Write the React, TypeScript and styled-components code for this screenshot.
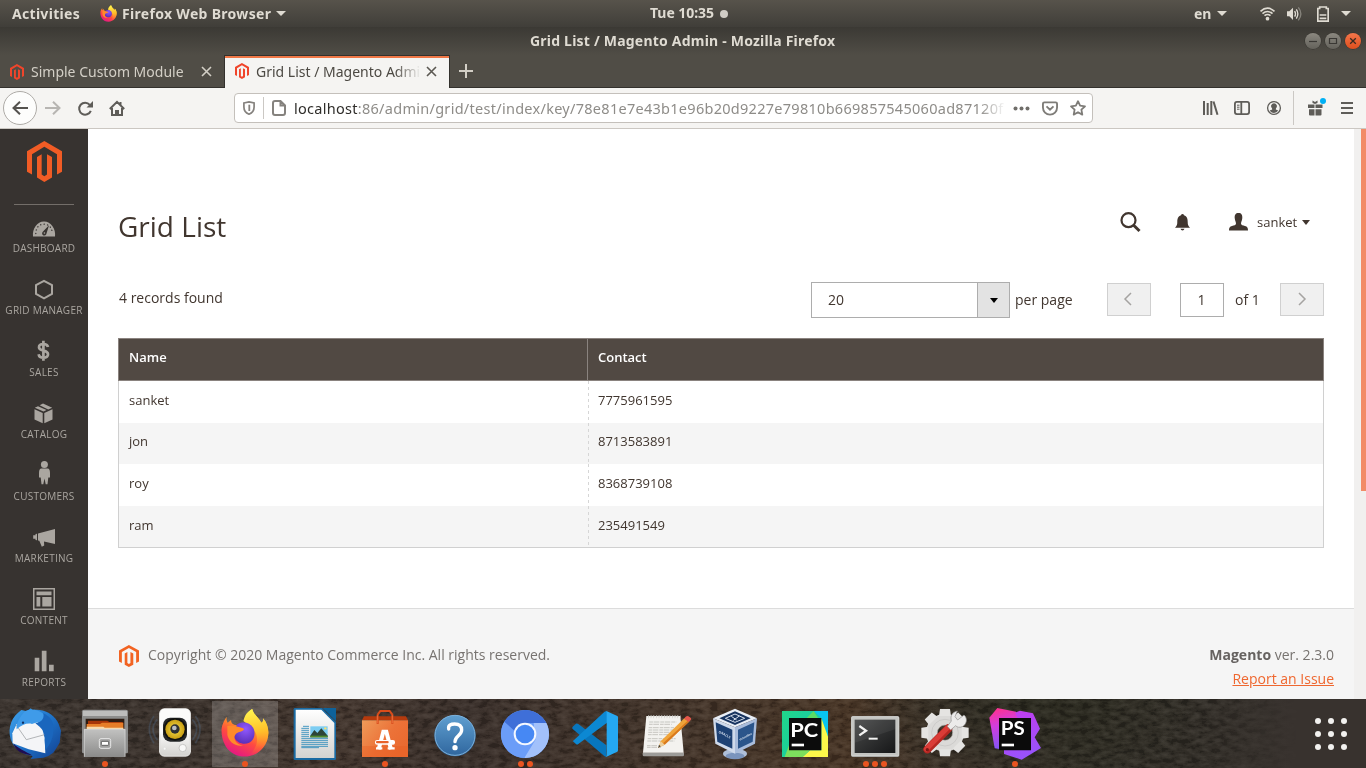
import React from "react";
import styled, { createGlobalStyle } from "styled-components";

const UI = `"Noto Sans", "Open Sans", sans-serif`;
const PAGE = `"Open Sans", "Noto Sans", sans-serif`;

const Global = createGlobalStyle`
  * { box-sizing: border-box; }
  body { margin: 0; width: 1366px; height: 768px; overflow: hidden; background: #3b3530; }
  svg { display: block; flex: none; overflow: visible; }
`;

const Desktop = styled.div`
  width: 1366px;
  height: 768px;
  display: flex;
  flex-direction: column;
  font-family: ${UI};
  overflow: hidden;
`;

/* ---------- system bar ---------- */

const SystemBar = styled.header`
  height: 27px;
  display: grid;
  grid-template-columns: 1fr auto 1fr;
  align-items: center;
  background: linear-gradient(#57534b, #403e39);
  color: #dfdbd2;
`;

const BarGroup = styled.div<{ $end?: boolean; $pad?: string }>`
  display: flex;
  align-items: center;
  height: 27px;
  justify-content: ${(p) => (p.$end ? "flex-end" : "flex-start")};
  padding: ${(p) => p.$pad ?? "0"};
`;

const UiText = styled.span<{ $w: number; $bold?: boolean; $ls?: number; $size?: number; $gap?: number; $up?: number }>`
  flex: none;
  width: ${(p) => p.$w}px;
  margin-left: ${(p) => p.$gap ?? 0}px;
  padding-bottom: ${(p) => p.$up ?? 0}px;
  white-space: nowrap;
  line-height: 20px;
  font-size: ${(p) => p.$size ?? 14}px;
  font-weight: ${(p) => (p.$bold ? 700 : 400)};
  letter-spacing: ${(p) => p.$ls ?? 0}px;
`;

const Caret = styled.i<{ $w?: number; $h?: number; $color?: string; $gap?: number }>`
  flex: none;
  width: 0;
  height: 0;
  margin-left: ${(p) => p.$gap ?? 0}px;
  border-left: ${(p) => p.$w ?? 5}px solid transparent;
  border-right: ${(p) => p.$w ?? 5}px solid transparent;
  border-top: ${(p) => p.$h ?? 5}px solid ${(p) => p.$color ?? "#dfdbd2"};
`;

const Dot = styled.i`
  width: 8px;
  height: 8px;
  margin-left: 5px;
  border-radius: 50%;
  background: #d0ccc5;
`;

/* ---------- window chrome ---------- */

const TitleBar = styled.div`
  height: 28px;
  display: flex;
  align-items: center;
  justify-content: space-between;
  padding: 0 5px 0 530px;
  background: linear-gradient(#3b3934, #504d46);
  color: #dfdbd2;
`;

const WindowButtons = styled.div`
  display: flex;
  gap: 4px;
`;

const WindowButton = styled.span<{ $close?: boolean }>`
  width: 16px;
  height: 16px;
  border-radius: 50%;
  display: grid;
  place-items: center;
  background: ${(p) => (p.$close ? "linear-gradient(#f4764b, #df4f1d)" : "linear-gradient(#8b8880, #64625b)")};
  box-shadow: 0 0 0 0.5px #34322e;
`;

const TabStrip = styled.div`
  height: 33px;
  display: flex;
  align-items: stretch;
  background: #504d46;
  box-shadow: inset 0 -1px #33312d;
`;

const Tab = styled.div<{ $active?: boolean }>`
  width: ${(p) => (p.$active ? 226 : 224)}px;
  display: flex;
  align-items: center;
  padding-left: 10px;
  color: ${(p) => (p.$active ? "#4c4943" : "#d3cfc6")};
  background: ${(p) => (p.$active ? "#f5f4f2" : "transparent")};
  border: ${(p) => (p.$active ? "1px solid #33312d" : "0")};
  border-bottom: 0;
  padding-bottom: ${(p) => (p.$active ? 2 : 0)}px;
  box-shadow: ${(p) => (p.$active ? "inset 0 2px #f07746" : "none")};
`;

const Fade = styled.div<{ $w: number; $tail: number; $gap?: number }>`
  flex: none;
  width: ${(p) => p.$w}px;
  margin-left: ${(p) => p.$gap ?? 0}px;
  overflow: hidden;
  mask-image: linear-gradient(to right, #000 ${(p) => p.$w - p.$tail}px, transparent);
`;

const TabIcon = styled.div<{ $gap: number }>`
  margin-left: ${(p) => p.$gap}px;
`;

const Toolbar = styled.div`
  height: 41px;
  display: flex;
  align-items: center;
  background: #f5f4f2;
  border-bottom: 1px solid #cbc7c2;
  color: #5e5c58;
`;

const BackButton = styled.div`
  width: 34px;
  height: 34px;
  margin-left: 3px;
  border: 1px solid #aeaba7;
  border-radius: 50%;
  background: #fdfdfc;
  display: grid;
  place-items: center;
`;

const Slot = styled.div<{ $gap: number }>`
  margin-left: ${(p) => p.$gap}px;
`;

const UrlBar = styled.div`
  width: 859px;
  height: 30px;
  margin-left: 109px;
  display: flex;
  align-items: center;
  border: 1px solid #c4c0bb;
  border-radius: 4px;
  background: #fff;
  color: #8e8c88;
  b { font-weight: 400; color: #2f2d2a; }
`;

const VLine = styled.i<{ $h: number; $gap: number }>`
  width: 1px;
  height: ${(p) => p.$h}px;
  margin-left: ${(p) => p.$gap}px;
  background: #cbc8c4;
`;

/* ---------- Magento admin ---------- */

const Viewport = styled.div`
  height: 570px;
  display: flex;
  font-family: ${PAGE};
  color: #41362f;
  background: #fff;
`;

const Sidebar = styled.nav`
  width: 88px;
  display: flex;
  flex-direction: column;
  align-items: center;
  padding-top: 12px;
  background: #373330;
  overflow: hidden;
`;

const SideRule = styled.i`
  flex: none;
  width: 60px;
  height: 1px;
  margin: 22px 0 11px;
  background: #736e69;
`;

const NavItem = styled.a`
  flex: none;
  height: 62px;
  width: 88px;
  display: flex;
  flex-direction: column;
  align-items: center;
  color: #aaa6a0;
`;

const NavLabel = styled.span`
  height: 14px;
  line-height: 14px;
  font-size: 10px;
  letter-spacing: 0.25px;
  white-space: nowrap;
`;

const Content = styled.main`
  width: 1266px;
  display: flex;
  flex-direction: column;
`;

const PageHead = styled.div`
  display: flex;
  justify-content: space-between;
  align-items: flex-start;
  padding: 78px 44px 0 30px;
  height: 153px;
`;

const PageTitle = styled.h1`
  margin: 0;
  font-size: 28px;
  line-height: 38px;
  font-weight: 400;
`;

const HeadActions = styled.div`
  display: flex;
  align-items: center;
  height: 30px;
  font-size: 13px;
`;

const UserName = styled.span`
  width: 39px;
  margin-left: 9px;
  white-space: nowrap;
`;

const GridToolbar = styled.div`
  display: flex;
  align-items: center;
  height: 36px;
  padding: 0 30px 0 31px;
  font-size: 14px;
  line-height: 20px;
`;

const Records = styled.span`
  flex: 1;
  padding-bottom: 4px;
`;

const Select = styled.div`
  width: 199px;
  height: 36px;
  display: flex;
  border: 1px solid #adadad;
`;

const SelectValue = styled.span`
  flex: 1;
  padding-left: 16px;
  line-height: 34px;
`;

const SelectArrow = styled.span`
  width: 32px;
  display: grid;
  place-items: center;
  background: #e3e3e3;
  border-left: 1px solid #adadad;
`;

const PagerText = styled.span<{ $w: number; $gap: number }>`
  width: ${(p) => p.$w}px;
  margin-left: ${(p) => p.$gap}px;
  white-space: nowrap;
`;

const PageButton = styled.span<{ $gap: number }>`
  width: 44px;
  height: 33px;
  margin: 0 0 1px ${(p) => p.$gap}px;
  display: grid;
  place-items: center;
  background: #f0f0f0;
  border: 1px solid #d0d0d0;
`;

const PageInput = styled.span`
  width: 44px;
  height: 34px;
  margin-left: 29px;
  border: 1px solid #adadad;
  text-align: center;
  line-height: 32px;
  padding-right: 1px;
`;

const Table = styled.div`
  margin: 20px 30px 0;
  height: 210px;
  border: 1px solid #d0d0d0;
  border-top: 0;
  font-size: 13px;
`;

const HeadRow = styled.div`
  display: grid;
  grid-template-columns: 469px 1fr;
  height: 43px;
  margin: 0 -1px;
  background: #514943;
  border: 1px solid #8a837f;
  color: #fff;
  font-weight: 600;
`;

const HeadCell = styled.span`
  padding-left: 10px;
  line-height: 37px;
  & + & { padding-left: 10px; border-left: 1px solid #8a837f; margin-left: -1px; }
`;

const Row = styled.div<{ $h: number; $alt: boolean }>`
  display: grid;
  grid-template-columns: 469px 1fr;
  height: ${(p) => p.$h}px;
  background: ${(p) => (p.$alt ? "#f5f5f5" : "#fff")};
`;

const Cell = styled.span<{ $lh: number }>`
  padding-left: 10px;
  height: 100%;
  line-height: ${(p) => p.$lh}px;
  & + & {
    background: repeating-linear-gradient(#d6d6d6 0 3px, transparent 3px 6px) 0 0 / 1px 100% no-repeat;
  }
`;

const Footer = styled.footer`
  height: 91px;
  margin-top: auto;
  padding: 35px 20px 0 31px;
  display: flex;
  justify-content: space-between;
  align-items: flex-start;
  background: #f5f5f5;
  border-top: 1px solid #dcdcdc;
  color: #777370;
  font-size: 14px;
  line-height: 24px;
`;

const Copyright = styled.div`
  display: flex;
  align-items: flex-start;
  gap: 9px;
  line-height: 22px;
  svg { margin-top: 1px; }
`;

const Version = styled.div`
  text-align: right;
  line-height: 22px;
  b { font-weight: 700; color: #666260; }
`;

const IssueLink = styled.a`
  display: block;
  margin-top: 2px;
  color: #ef672f;
  text-decoration: underline;
`;

const ScrollTrack = styled.div`
  width: 12px;
  background: #f1f0ef;
  display: flex;
  justify-content: flex-end;
`;

const ScrollThumb = styled.i`
  width: 5px;
  height: 362px;
  background: #f28b67;
`;

/* ---------- dock ---------- */

const Dock = styled.footer`
  position: relative;
  height: 69px;
  display: flex;
  overflow: hidden;
  background:
    radial-gradient(ellipse 170px 90px at 1030px 0, #2b2a20, transparent),
    linear-gradient(90deg, #3a332e 0, #3c332d 200px, #43362e 330px, #3a302b 470px, #44352a 700px, #473526 850px, #3c3229 950px, #302d25 1080px, #312d27 1200px, #38322e 1290px);
`;

const Wallpaper = styled.svg`
  position: absolute;
  left: 0;
  top: 0;
  mix-blend-mode: soft-light;
  opacity: 0.3;
  mask-image: linear-gradient(to right, #000 1200px, transparent 1300px);
`;

const DockItem = styled.div<{ $active?: boolean }>`
  position: relative;
  width: 70px;
  height: 69px;
  flex: none;
  background: ${(p) =>
    p.$active ? "linear-gradient(rgba(255,255,255,.19), rgba(255,255,255,.19)) 2px 2px / 66px 66px no-repeat" : "none"};
`;

const RunningDots = styled.div`
  position: absolute;
  left: 0;
  right: 0;
  bottom: 1px;
  display: flex;
  justify-content: center;
  gap: 3px;
  i { width: 6px; height: 6px; border-radius: 50%; background: #e95420; }
`;

const AppGrid = styled.div`
  position: relative;
  display: grid;
  grid-template-columns: repeat(3, 6px);
  grid-auto-rows: 6px;
  gap: 7px;
  margin: 19px 0 0 265px;
  i { border-radius: 50%; background: #f2f1ef; }
`;

/* ---------- drawings ---------- */

const Magento = ({ w, h, color = "#f15c25" }: { w: number; h: number; color?: string }) => (
  <svg width={w} height={h} viewBox="81 40 105 121" preserveAspectRatio="none" fill={color}>
    <path d="M133 40 186 70V131L171 139V79L133 57 96 79V139L81 131V70Z" />
    <path d="M111 87 125 79V139L133 144 141 139V79L156 87V148L133 161 111 148Z" />
  </svg>
);

const Firefox = ({ size, id }: { size: number; id: string }) => (
  <svg width={size} height={size} viewBox="662 38 146 146">
    <defs>
      <linearGradient id={id + "a"} x1=".8" y1="0" x2=".3" y2="1">
        <stop offset="0" stopColor="#fff44f" />
        <stop offset=".35" stopColor="#ffa91e" />
        <stop offset=".65" stopColor="#ff4a41" />
        <stop offset="1" stopColor="#e31587" />
      </linearGradient>
      <radialGradient id={id + "b"} cx=".55" cy=".3" r=".7">
        <stop offset="0" stopColor="#9059ff" />
        <stop offset="1" stopColor="#5b2fb8" />
      </radialGradient>
      <linearGradient id={id + "c"} x1=".5" y1="0" x2=".6" y2="1">
        <stop offset="0" stopColor="#fff44f" />
        <stop offset=".5" stopColor="#ffc02a" />
        <stop offset="1" stopColor="#ff7a2f" stopOpacity="0" />
      </linearGradient>
    </defs>
    <path fill={`url(#${id}a)`} d="M681 63C680 71 681 76 684 81L694 73C694 80 697 85 704 87L730 94 757 80C748 61 740 52 757 40 764 62 777 65 784 81 791 77 790 72 789 68 813 95 808 132 790 155 761 193 702 190 678 151 662 124 664 94 670 83 674 73 678 68 681 63Z" />
    <path fill={`url(#${id}c)`} d="M757 40C764 62 777 65 784 81 791 77 790 72 789 68 813 95 808 132 790 155 779 169 765 174 752 176 776 149 779 116 755 96L731 76C735 58 742 48 757 40Z" />
    <path fill={`url(#${id}b)`} d="M712 86C728 76 750 80 760 96 768 112 764 132 748 141 732 148 712 142 704 126L704 106Z" />
    <path fill="#ff8a2a" d="M683 91C699 88 714 92 728 97 737 100 731 105 724 107 712 109 707 114 704 122 703 138 716 147 730 149 706 154 686 136 683 117Z" />
  </svg>
);

const TabClose = ({ color }: { color: string }) => (
  <svg width="11" height="11" viewBox="0 0 11 11" stroke={color} strokeWidth="1.6" fill="none">
    <path d="M1 1 10 10M10 1 1 10" />
  </svg>
);

const navItems: { label: string; icon: React.ReactNode }[] = [
  {
    label: "DASHBOARD",
    icon: (
      <>
        <path fill="#aaa6a0" d="M6 20.5C5 13 10 5.5 17 5.5S29 13 28 20.5Z" />
        <path stroke="#373330" strokeWidth="1.3" strokeLinecap="round" strokeDasharray=".2 3.3" fill="none" d="M8.8 17.5C8.6 12 12 8.2 17 8.2S25.4 12 25.2 17.5" />
        <path fill="#373330" d="M22 9.2 19.5 17.6A2.2 2.2 0 1 1 15.8 15.8Z" />
        <circle cx="17.4" cy="17" r=".8" fill="#aaa6a0" />
      </>
    ),
  },
  { label: "GRID MANAGER", icon: <path fill="none" stroke="#aaa6a0" strokeWidth="2" d="M17 2.8 25 7.2V16L17 20.3 9 16V7.2Z" /> },
  {
    label: "SALES",
    icon: (
      <path fill="none" stroke="#aaa6a0" strokeWidth="2.7" d="M21 7C20.5 4.6 18.800 4 16.300 4 13.600 4 12 5.200 12 7.200 12 9.600 14.300 10 16.500 10.600 19 11.200 21 12 21 14.300 21 16.600 19 17.700 16.400 17.700 13.600 17.700 12 16.500 11.600 14.200M16.400.7V20.700" />
    ),
  },
  {
    label: "CATALOG",
    icon: (
      <>
        <path fill="#aaa6a0" d="M7.500 7.200 15.700 11V21.300L7.500 17.500ZM25.500 7.200 17.300 11V21.300L25.500 17.500Z" />
        <path fill="#aaa6a0" d="M7.800 5.800 11 4.200 19.500 8.100 16.500 9.600ZM12.600 3.300 16 1.500 25.200 5.800 21.200 7.400Z" />
      </>
    ),
  },
  {
    label: "CUSTOMERS",
    icon: (
      <>
        <circle cx="17.400" cy=".4" r="3.500" fill="#aaa6a0" />
        <path fill="#aaa6a0" d="M14 4.600H21C22.500 5 23 7 23 9V13.500H21.300L20.500 20.300H18.700L17.500 14.500 16.300 20.300H14.500L13.700 13.500H12V9C12 7 12.500 5 14 4.600Z" />
      </>
    ),
  },
  {
    label: "MARKETING",
    icon: (
      <path fill="#aaa6a0" d="M28 3V18L17 15.600 17.200 19.600 14.800 20.700 12.300 14.700 11 14.400V7.600ZM10 7.800V14.200L8.500 14V12.800H6.200V9.300H8.500V8Z" />
    ),
  },
  {
    label: "CONTENT",
    icon: (
      <>
        <path fill="none" stroke="#aaa6a0" strokeWidth="1.500" d="M6.750.75H27.250V21.250H6.750Z" />
        <path fill="#aaa6a0" d="M9.500 3.500H24.500V7.300H9.500ZM9.500 9H13.300V18.500H9.500ZM15.300 9H24.500V18.500H15.300Z" />
      </>
    ),
  },
  { label: "REPORTS", icon: <path fill="#aaa6a0" d="M7.700 7.800H12.300V21.300H7.700ZM14.800.8H19.500V21.300H14.800ZM22 14.700H26.700V21.300H22Z" /> },
];

/* Launcher icons share a grid of three units per pixel. */
const Icon = ({ x, children }: { x: number; children: React.ReactNode }) => (
  <svg width="70" height="69" viewBox={`${x} 9 210 207`}>
    {children}
  </svg>
);

const Gradients = () => (
  <svg width="0" height="0" style={{ position: "absolute" }}>
    <defs>
      <linearGradient id="tb" x2="1" y2="1"><stop stopColor="#42a5ee" /><stop offset=".5" stopColor="#1e72c8" /><stop offset="1" stopColor="#123f8f" /></linearGradient>
      <linearGradient id="steel" x2="0" y2="1"><stop stopColor="#c2c2c1" /><stop offset="1" stopColor="#8b8b8a" /></linearGradient>
      <linearGradient id="white" x2="0" y2="1"><stop stopColor="#fff" /><stop offset="1" stopColor="#d4d3d0" /></linearGradient>
      <linearGradient id="bag" x2="1" y2=".6"><stop stopColor="#ee9b59" /><stop offset=".6" stopColor="#ec7238" /><stop offset="1" stopColor="#ea6a30" /></linearGradient>
      <linearGradient id="help" x2="0" y2="1"><stop stopColor="#5f9fd0" /><stop offset="1" stopColor="#30679f" /></linearGradient>
      <linearGradient id="term" x2="1" y2="1"><stop stopColor="#4a4b4b" /><stop offset="1" stopColor="#161718" /></linearGradient>
      <linearGradient id="pc" x1="0" y1="0" x2="1" y2=".5"><stop stopColor="#21d789" /><stop offset="1" stopColor="#16c9b0" /></linearGradient>
      <linearGradient id="ps" x1=".2" y1="0" x2=".4" y2="1"><stop stopColor="#ff318c" /><stop offset=".4" stopColor="#d33ddd" /><stop offset="1" stopColor="#7a58fb" /></linearGradient>
      <linearGradient id="psr" x2=".3" y2="1"><stop stopColor="#c63bef" /><stop offset="1" stopColor="#9952fb" /></linearGradient>
      <radialGradient id="cone"><stop stopColor="#f7e04c" /><stop offset="1" stopColor="#c99e14" /></radialGradient>
    </defs>
  </svg>
);

const dockApps: { name: string; dots?: number; active?: boolean; art: React.ReactNode }[] = [
  {
    name: "Thunderbird",
    art: (
      <Icon x={0}>
        <path fill="url(#tb)" d="M64 42 82 46 92 37 98 42C128 38 158 52 172 76L176 84 183 104 181 122 179 140 168 158 160 170 145 180 130 185 112 187 92 189 98 180C70 176 42 160 32 130 22 92 36 62 64 42Z" />
        <path fill="#1f0d52" d="M40 142C54 158 76 166 96 178 66 176 46 164 40 142Z" />
        <path fill="#f4f5f7" d="M50 84 110 76 124 88 134 126 136 172 86 160 38 142 37 112Z" />
        <path fill="none" stroke="#8f9296" strokeWidth="2" d="M48 86 79 131 134 116" />
        <path fill="#3f9be9" d="M68 54C78 38 96 38 114 44 134 52 144 64 138 84 126 76 112 78 96 84 82 80 66 86 50 100 48 86 56 68 68 54Z" />
        <path fill="#1a66bd" d="M130 52C148 60 160 74 160 94 162 120 152 146 136 162L134 132C140 110 124 96 106 82 122 80 134 70 130 52Z" />
        <circle cx="69" cy="80" r="3.500" fill="#0d2f63" />
      </Icon>
    ),
  },
  {
    name: "Files", dots: 1,
    art: (
      <Icon x={210}>
        <path fill="#8d8d8c" d="M246 46Q246 41 252 41H378Q384 41 384 46V168Q384 172 380 172H250Q246 172 246 168Z" />
        <path fill="#bdbdbc" d="M249 44H381V60H249Z" />
        <path fill="#2d1c13" d="M257 68H373V100H257Z" />
        <path fill="#a63408" d="M264 74H322L328 78H368V90H264Z" />
        <path fill="#e57d28" d="M260 84H300L306 80H370V100H260Z" />
        <path fill="#f7d9ac" d="M260 92H310L314 95H370V100H260Z" />
        <path fill="url(#steel)" d="M252 99H376V183H252Z" />
        <path fill="none" stroke="#d8d8d8" strokeWidth="2" d="M253 182V100H375V182" />
        <rect x="298" y="128" width="34" height="29" rx="5" fill="#a1a1a0" stroke="#e8e8e8" strokeWidth="3" />
        <rect x="304" y="136" width="22" height="12" rx="2" fill="#fff" stroke="#626262" strokeWidth="3" />
      </Icon>
    ),
  },
  {
    name: "Rhythmbox",
    art: (
      <Icon x={420}>
        <g fill="none" stroke="#52779d" strokeWidth="5" opacity=".28">
          <path d="M472 70Q446 98 472 132M462 60Q434 98 462 142M577 70Q603 98 577 132M586 60Q614 98 586 142" />
        </g>
        <rect x="477" y="37" width="96" height="145" rx="16" fill="#dddcda" />
        <rect x="480" y="38" width="90" height="84" rx="14" fill="#fbfbfa" />
        <rect x="481" y="100" width="88" height="78" rx="12" fill="url(#white)" />
        <rect x="489" y="65" width="72" height="72" rx="22" fill="#26282a" />
        <circle cx="525" cy="100" r="34" fill="#10110f" />
        <circle cx="525" cy="100" r="29" fill="url(#cone)" />
        <circle cx="525" cy="99" r="14" fill="#2e3033" />
        <circle cx="523" cy="96" r="7" fill="#b9bec2" />
        <circle cx="548" cy="156" r="11" fill="#f8f8f7" stroke="#b3b2b0" strokeWidth="2" />
        <circle cx="494" cy="158" r="4" fill="#f7f7f7" stroke="#cbcac8" />
      </Icon>
    ),
  },
  {
    name: "Firefox", dots: 1, active: true,
    art: (
      <svg width="70" height="69" viewBox="0 0 70 69">
        <g transform="translate(10.300 9.300)"><Firefox size={49} id="big" /></g>
      </svg>
    ),
  },
  {
    name: "Writer",
    art: (
      <Icon x={840}>
        <path fill="#1a6aa2" d="M885 36H966L1008 78V188Q1008 192 1004 192H885Q881 192 881 188V40Q881 36 885 36Z" />
        <path fill="url(#white)" d="M887 41H964L1003 81V186H887Z" />
        <path fill="#0e629a" d="M968 36H1008V76Z" />
        <g stroke="#2587b8" strokeWidth="2.500">
          <path d="M909 91H927M904 97H927M904 103H927M904 109H927M904 115H927M904 121H927M904 127H984M904 133H984M904 139H984M904 145H984M904 151H984M904 155H957" />
        </g>
        <rect x="931" y="91" width="52" height="33" fill="#7ccdf2" />
        <path fill="#2d4639" d="M931 119 943 102 952 111 964 97 983 119V124H931Z" />
        <path fill="#4f8c2d" d="M931 119H983V124H931Z" />
        <circle cx="976" cy="97" r="3.500" fill="#f8df6d" />
      </Icon>
    ),
  },
  {
    name: "Software", dots: 1,
    art: (
      <Icon x={15}>
        <path fill="#b53a0d" d="M57 61H183L189 73H51Z" />
        <path fill="url(#bag)" d="M51 73H189V183H51Z" />
        <path fill="#e85c20" d="M51 150H189V183H51Z" opacity=".35" />
        <path fill="none" stroke="#d94c1a" strokeWidth="6" d="M98 84V56L106 45H134L142 56V84" />
        <path fill="none" stroke="#ef7d4e" strokeWidth="2" d="M97 82V58M142 82V58" />
        <path fill="none" stroke="#fff" strokeWidth="12" d="M101 160 115 107H124L138 160" />
        <path stroke="#fff" strokeWidth="7" d="M93 157H112M128 157H149" />
        <rect x="90" y="132" width="60" height="14" rx="6" fill="#fff" />
        <rect x="93" y="135" width="38" height="7" rx="3" fill="#e8622a" />
      </Icon>
    ),
  },
  {
    name: "Help",
    art: (
      <Icon x={225}>
        <circle cx="330" cy="119" r="62" fill="#2d5f93" />
        <circle cx="330" cy="118" r="60" fill="url(#help)" stroke="#7db1d9" strokeWidth="3" />
        <path fill="none" stroke="#fff" strokeWidth="10" strokeLinecap="round" d="M311 99C309 87 318 84 329 84 343 84 350 91 350 102 350 119 330 120 330 137" />
        <circle cx="330" cy="155" r="8" fill="#fff" />
      </Icon>
    ),
  },
  {
    name: "Chromium", dots: 2,
    art: (
      <Icon x={435}>
        <circle cx="540" cy="114" r="72" fill="#6b9df8" />
        <path fill="#3f6fd8" d="M478 77A72 72 0 0 1 604 81H540L508 104Z" />
        <path fill="#a2c1fb" d="M604 81A72 72 0 0 1 538 186L571 132 566 81Z" />
        <path fill="#6b9df8" d="M478 77 509 130 545 148 538 186A72 72 0 0 1 478 77Z" />
        <circle cx="540" cy="114" r="34" fill="#f4f8ff" />
        <circle cx="540" cy="114" r="28" fill="#4688f4" />
      </Icon>
    ),
  },
  {
    name: "Code",
    art: (
      <Icon x={645}>
        <path fill="#0876bd" d="M683 92 693 83Q696 81 700 84L784 148V182Q781 183 777 179L683 99Q680 96 683 92Z" />
        <path fill="#0c88d3" d="M683 136 777 49Q781 44 786 46V80L700 144Q696 147 693 144L683 135Z" />
        <path fill="#25a8f2" d="M784 45 817 60Q819 61 819 64V163Q819 166 817 167L783 183Q785 180 785 175V52Q785 48 784 45Z" />
      </Icon>
    ),
  },
  {
    name: "Text Editor",
    art: (
      <Icon x={855}>
        <path fill="#9d9c99" d="M893 170H1017V177Q1017 181 1013 181H897Q893 181 893 177Z" />
        <path fill="#f3f2ef" d="M904 60H1006L1016 170H894Z" />
        <path stroke="#66645f" strokeWidth="3" strokeDasharray="4 4" d="M909 59H1006" />
        <path stroke="#d2d1cd" strokeWidth="9" strokeDasharray="2 6" d="M909 62H1006" />
        <path stroke="#aaa7a2" strokeWidth="1.800" strokeDasharray="11 2 17 3" d="M913 78H994M912 85H980M911 95H987M910 102H1000M910 109H990M909 116H978M908 128H992M907 135H988M906 149H955M906 154H948" />
        <path fill="#f0a43a" d="M1018 67 1032 77 959 146 940 155 947 136Z" />
        <path fill="#d9791d" d="M1028 74 1032 77 959 146 954 142Z" />
        <path fill="#e5574b" d="M1022 62Q1027 58 1034 63T1037 72L1032 78 1017 68Z" />
        <path fill="#edcf9c" d="M947 136 959 146 940 155Z" />
        <path fill="#333" d="M943 147 947 151 939 156Z" />
      </Icon>
    ),
  },
  {
    name: "VirtualBox",
    art: (
      <Icon x={30}>
        <ellipse cx="135" cy="173" rx="36" ry="15" fill="#aebfd9" />
        <ellipse cx="135" cy="180" rx="28" ry="10" fill="#7a94bd" />
        <path fill="#e9eef6" d="M69 67 135 38 201 67 135 94Z" />
        <path fill="#cfdaeb" d="M69 67 135 94V173L76 143Z" />
        <path fill="#a9bcdb" d="M201 67 135 94V173L195 143Z" />
        <path fill="#17335f" d="M88 67 135 46 182 67 135 87Z" />
        <path fill="none" stroke="#d5deec" strokeWidth="3" d="M106 67 135 54 164 67 135 79ZM124 61 140 72M148 60 130 73" />
        <path fill="#1d4174" d="M77 79 127 101V158L82 137Z" />
        <path fill="#2b558b" d="M193 79 144 101V158L188 137Z" />
        <text x="85" y="110" fill="#c8d5e7" fontFamily="Open Sans, sans-serif" fontSize="10" fontWeight="700" transform="rotate(27 85 110)">ORACLE</text>
        <text x="149" y="134" fill="#d6e0ee" fontFamily="Open Sans, sans-serif" fontSize="8" fontWeight="700" transform="rotate(-27 149 134)">VirtualBox</text>
      </Icon>
    ),
  },
  {
    name: "PyCharm",
    art: (
      <Icon x={240}>
        <path fill="url(#pc)" d="M276 45H414V183H276Z" />
        <path fill="#08c5ef" d="M371 45H414V122L394 65Z" />
        <path fill="#5bdc66" d="M350 66 371 45 384 66Z" />
        <path fill="#fcf84a" d="M394 66 414 122V183H338L360 163H394Z" />
        <path fill="#7de05d" d="M298 145 284 183H338L360 162Z" />
        <path fill="#0c0c0c" d="M297 66H394V163H297Z" />
        <text x="301" y="122" fill="#fff" fontFamily="Lato, sans-serif" fontSize="59" fontWeight="700" textLength="84" lengthAdjust="spacingAndGlyphs">PC</text>
        <path fill="#fff" d="M305 143H342V151H305Z" />
      </Icon>
    ),
  },
  {
    name: "Terminal", dots: 3,
    art: (
      <Icon x={450}>
        <rect x="483" y="60" width="145" height="123" rx="5" fill="#8e8f8c" />
        <rect x="485" y="62" width="141" height="118" rx="3" fill="#c4c5c2" stroke="#e6e6e4" strokeWidth="2" />
        <rect x="494" y="71" width="122" height="100" fill="url(#term)" />
        <path fill="#fff" fillOpacity=".06" d="M494 71H616V100L494 140Z" />
        <path fill="none" stroke="#f3f3f2" strokeWidth="7" d="M508 90 528 104 508 118" />
        <path stroke="#f3f3f2" strokeWidth="6" d="M536 128H563" />
      </Icon>
    ),
  },
  {
    name: "Settings",
    art: (
      <Icon x={660}>
        <g transform="translate(765 110)">
          <circle r="40" fill="none" stroke="#dbdad8" strokeWidth="34" />
          <g fill="#e5e4e2">
            {[0, 45, 90, 135, 180, 225, 270, 315].map((a) => (
              <path key={a} transform={`rotate(${a})`} d="M-18-50 -15-71H15L18-50Z" />
            ))}
          </g>
          <circle r="40" fill="none" stroke="#c4c3c1" strokeWidth="2" />
          <circle r="23" fill="none" stroke="#b3b2b0" strokeWidth="2" />
        </g>
        <path fill="none" stroke="#b52722" strokeWidth="24" strokeLinecap="round" d="M712 160 775 97" />
        <path fill="none" stroke="#da3c37" strokeWidth="15" strokeLinecap="round" d="M709 159 772 96" />
        <path fill="#ecebea" stroke="#92918f" strokeWidth="2" d="M772 91 784 75C780 58 788 48 802 45L795 62 803 72 822 57C833 66 831 83 819 91 810 96 801 94 797 89L782 102Z" />
        <circle cx="712" cy="161" r="5" fill="#7e1815" />
      </Icon>
    ),
  },
  {
    name: "PhpStorm", dots: 1,
    art: (
      <Icon x={870}>
        <path fill="url(#ps)" d="M898 65 922 36 978 47 985 66 960 164 914 157Z" />
        <path fill="url(#psr)" d="M975 50 990 44 1029 52 1050 98 1034 124 1053 156 995 191 942 174 942 158 1000 100Z" />
        <path fill="#0b0b0b" d="M927 66H1023V163H927Z" />
        <text x="932" y="118" fill="#fff" fontFamily="Lato, sans-serif" fontSize="54" fontWeight="700" textLength="72" lengthAdjust="spacingAndGlyphs">PS</text>
        <path fill="#fff" d="M935 143H972V151H935Z" />
      </Icon>
    ),
  },
];

const rows = [
  ["sanket", "7775961595", 42, 38],
  ["jon", "8713583891", 41, 37],
  ["roy", "8368739108", 42, 38],
  ["ram", "235491549", 41, 38],
] as const;

export default function App() {
  return (
    <Desktop>
      <Global />
      <Gradients />
      <SystemBar>
        <BarGroup $pad="0 0 0 12px">
          <UiText $w={88} $bold $ls={0.3}>Activities</UiText>
          <Firefox size={17} id="small" />
          <UiText $w={150} $gap={5} $bold $ls={0.31}>Firefox Web Browser</UiText>
          <Caret $gap={4} />
        </BarGroup>
        <BarGroup $pad="0 0 0 12px">
          <UiText $w={65} $bold $up={1} $ls={-0.05}>Tue 10:35</UiText>
          <Dot />
        </BarGroup>
        <BarGroup $end $pad="0 15px 0 0">
          <UiText $w={18} $bold>en</UiText>
          <Caret $gap={5} />
          <Slot $gap={33}>
            <svg width="15" height="14" viewBox="1062 19 44 42" fill="none" stroke="#dfdbd2" strokeWidth="5">
              <path d="M1063 32Q1084 13 1105 32M1069 39Q1084 26 1099 39M1075 45Q1084 38 1093 45" />
              <circle cx="1084" cy="54" r="5.500" fill="#dfdbd2" stroke="none" />
            </svg>
          </Slot>
          <Slot $gap={12}>
            <svg width="15" height="14" viewBox="1143 19 45 42" fill="none" stroke="#dfdbd2" strokeWidth="4">
              <path fill="#dfdbd2" stroke="none" d="M1143 32H1150L1161 21V58L1150 47H1143Z" />
              <path d="M1166 31Q1171 39 1166 48M1171 26Q1180 39 1171 54" />
              <path opacity=".4" d="M1177 20Q1192 39 1177 59" />
            </svg>
          </Slot>
          <Slot $gap={15}>
            <svg width="12" height="16" viewBox="1233 15 36 48" fill="none" stroke="#dfdbd2" strokeWidth="5">
              <path d="M1235.500 22.500H1241V18H1261V22.500H1266.500V60.500H1235.500ZM1241 42H1261M1241 52H1261" />
            </svg>
          </Slot>
          <Caret $gap={12} />
        </BarGroup>
      </SystemBar>

      <TitleBar>
        <UiText $w={306} $bold $ls={0.21}>Grid List / Magento Admin - Mozilla Firefox</UiText>
        <WindowButtons>
          <WindowButton><svg width="8" height="8" stroke="#3a3834" strokeWidth="1.200"><path d="M0 4.500H8" /></svg></WindowButton>
          <WindowButton><svg width="8" height="8" stroke="#3a3834" strokeWidth="1.200" fill="none"><path d="M.5 1.500H7.500V6.500H.5Z" /></svg></WindowButton>
          <WindowButton $close><svg width="8" height="8" stroke="#3a2a20" strokeWidth="1.300"><path d="M1.200 1.200 6.800 6.800M6.800 1.200 1.200 6.800" /></svg></WindowButton>
        </WindowButtons>
      </TitleBar>

      <TabStrip>
        <Tab>
          <Magento w={14} h={16} color="#f0452b" />
          <UiText $w={170} $gap={7}>Simple Custom Module</UiText>
          <TabIcon $gap={0}><TabClose color="#d3cfc6" /></TabIcon>
        </Tab>
        <Tab $active>
          <Magento w={14} h={16} color="#f0452b" />
          <Fade $w={165} $tail={26} $gap={7}><UiText $w={190}>Grid List / Magento Admin</UiText></Fade>
          <TabIcon $gap={5}><TabClose color="#5b5852" /></TabIcon>
        </Tab>
        <Slot $gap={10}>
          <svg width="13" height="33" stroke="#d3cfc6" strokeWidth="2"><path d="M-1 16H13M6 9V23" /></svg>
        </Slot>
      </TabStrip>

      <Toolbar>
        <BackButton>
          <svg width="16" height="14" viewBox="0 0 16 14" fill="none" stroke="#55534f" strokeWidth="2"><path d="M16 7H1.500M8 .8 1.500 7 8 13.200" /></svg>
        </BackButton>
        <Slot $gap={8}>
          <svg width="16" height="14" viewBox="0 0 16 14" fill="none" stroke="#b7b5b2" strokeWidth="2"><path d="M0 7H14.500M8 .8 14.500 7 8 13.200" /></svg>
        </Slot>
        <Slot $gap={17}>
          <svg width="15" height="15" viewBox="0 0 15 15" fill="none" stroke="#5e5c58" strokeWidth="2"><path d="M11.800 3.800A6 6 0 1 0 12.800 9.800" /><path fill="#5e5c58" stroke="none" d="M8.500 6.500H15V0Z" /></svg>
        </Slot>
        <Slot $gap={16}>
          <svg width="16" height="16" viewBox="0 0 16 16" fill="none" stroke="#5e5c58" strokeWidth="2"><path d="M.8 9 8 1.800 15.200 9M3 8V15H13V8M7 15V11H9V15M11.500 2V5" /></svg>
        </Slot>
        <UrlBar>
          <Slot $gap={8}>
            <svg width="12" height="14" viewBox="0 0 12 14" fill="none" stroke="#85827e" strokeWidth="1.700"><path d="M.9 2 6 .8 11.100 2V6C11.100 9.500 9 12 6 13.200 3 12 .9 9.500 .9 6Z" /><path strokeWidth="1.800" d="M6.300 3.700V10" /></svg>
          </Slot>
          <VLine $h={22} $gap={8} />
          <Slot $gap={8}>
            <svg width="14" height="16" viewBox="0 0 14 16" fill="none" stroke="#85827e" strokeWidth="2"><path d="M8.500 1H3Q1 1 1 3V13Q1 15 3 15H11Q13 15 13 13V5.500ZM8.500 1V5.500H13" /></svg>
          </Slot>
          <Fade $w={712} $tail={26} $gap={8}>
            <UiText $w={760} $size={14.5} $ls={0.28}><b>localhost</b>:86/admin/grid/test/index/key/78e81e7e43b1e96b20d9227e79810b669857545060ad87120f</UiText>
          </Fade>
          <Slot $gap={7}>
            <svg width="17" height="5" fill="#706e6a"><circle cx="2.500" cy="2.500" r="2" /><circle cx="8.500" cy="2.500" r="2" /><circle cx="14.500" cy="2.500" r="2" /></svg>
          </Slot>
          <Slot $gap={12}>
            <svg width="16" height="15" viewBox="0 0 17 15" fill="none" stroke="#7e7c78" strokeWidth="2"><path d="M2.500 1H14.500Q16 1 16 2.500V6.500A7.500 7.500 0 0 1 1 6.500V2.500Q1 1 2.500 1ZM4.800 5.300 8.500 8.800 12.200 5.300" /></svg>
          </Slot>
          <Slot $gap={12}>
            <svg width="16" height="16" viewBox="0 0 16 16" fill="none" stroke="#7e7c78" strokeWidth="1.800" strokeLinejoin="round"><path d="M8 1.200 10.100 5.700 15 6.300 11.400 9.700 12.300 14.600 8 12.200 3.700 14.600 4.600 9.700 1 6.300 5.900 5.700Z" /></svg>
          </Slot>
        </UrlBar>
        <Slot $gap={110}>
          <svg width="15" height="14" viewBox="0 0 15 14" fill="none" stroke="#5e5c58" strokeWidth="2"><path d="M1 0V14M4.700 2V14M8.300 0V14M10.500.5 14.500 13.700" /></svg>
        </Slot>
        <Slot $gap={16}>
          <svg width="16" height="14" viewBox="0 0 16 14" fill="none" stroke="#5e5c58" strokeWidth="1.800"><rect x=".9" y=".9" width="14.200" height="12.200" rx="2" /><path d="M7.300 1V13" /><path strokeWidth="1" d="M3 4.200H5.500M3 6.200H5.500M3 8.200H5.500" /></svg>
        </Slot>
        <Slot $gap={17}>
          <svg width="14" height="14" viewBox="0 0 14 14" fill="none" stroke="#5e5c58" strokeWidth="1.300"><circle cx="7" cy="7" r="6.400" /><path fill="#5e5c58" stroke="none" d="M7 2.300A2.900 2.900 0 0 1 9 7.300L8.800 8.400 11.200 9.600Q9.800 12 7 12T2.800 9.600L5.200 8.400 5 7.300A2.900 2.900 0 0 1 7 2.300Z" /></svg>
        </Slot>
        <VLine $h={34} $gap={12} />
        <Slot $gap={14}>
          <svg width="19" height="18" viewBox="0 0 19 18" fill="#5e5c58"><path d="M0 5.500H6.500V9H0ZM7.500 5.500H14.500V9H7.500ZM1 10.200H6.500V16.500H2Q1 16.500 1 15.500ZM7.500 10.200H13.500V15.500Q13.500 16.500 12.500 16.500H7.500ZM4.500 1.500 7 3 9.500 1.500V4L7 5 4.500 4Z" /><circle cx="15" cy="2" r="3" fill="#00b0f5" /></svg>
        </Slot>
        <Slot $gap={14}>
          <svg width="12" height="12" stroke="#5e5c58" strokeWidth="2"><path d="M0 1H12M0 6H12M0 11H12" /></svg>
        </Slot>
      </Toolbar>

      <Viewport>
        <Sidebar>
          <Magento w={35} h={41} />
          <SideRule />
          {navItems.map((n) => (
            <NavItem key={n.label}>
              <svg width="34" height="25" viewBox="0 0 34 25">{n.icon}</svg>
              <NavLabel>{n.label}</NavLabel>
            </NavItem>
          ))}
        </Sidebar>

        <Content>
          <PageHead>
            <PageTitle>Grid List</PageTitle>
            <HeadActions>
              <svg width="21" height="20" viewBox="0 0 21 20" fill="none" stroke="#41362f"><circle cx="8.500" cy="8.200" r="7" strokeWidth="2.200" /><path strokeWidth="3" d="M13.400 13 19.500 19" /></svg>
              <Slot $gap={34}>
                <svg width="15" height="17" viewBox="0 0 15 17" fill="#41362f"><path d="M7.500 0Q8.700 0 9 1.300C12 2.200 12.700 5 12.700 8 12.700 11 13.300 12 15 13.800H0C1.700 12 2.300 11 2.300 8 2.300 5 3 2.200 6 1.300Q6.300 0 7.500 0ZM5.500 14.800H9.500Q9 16.600 7.500 16.600T5.500 14.800Z" /></svg>
              </Slot>
              <Slot $gap={39}>
                <svg width="19" height="18" viewBox="0 0 19 18" fill="#41362f"><path d="M9.500 0C12.500 0 13.500 2 13.300 5 13 8 12 9 12 10.500 12 12 14 12.500 16 13 18.300 13.700 19 14.500 19 17.500H0C0 14.500.7 13.700 3 13 5 12.500 7 12 7 10.500 7 9 6 8 5.700 5 5.500 2 6.500 0 9.500 0Z" /></svg>
              </Slot>
              <UserName>sanket</UserName>
              <Caret $w={4} $h={5} $color="#41362f" $gap={6} />
            </HeadActions>
          </PageHead>

          <GridToolbar>
            <Records>4 records found</Records>
            <Select>
              <SelectValue>20</SelectValue>
              <SelectArrow><Caret $w={4} $h={5} $color="#000" /></SelectArrow>
            </Select>
            <PagerText $w={58} $gap={5}>per page</PagerText>
            <PageButton $gap={34}>
              <svg width="8" height="13" fill="none" stroke="#a5a3a1" strokeWidth="1.500"><path d="M6 0 0 6 6 12" /></svg>
            </PageButton>
            <PageInput>1</PageInput>
            <PagerText $w={26} $gap={11}>of 1</PagerText>
            <PageButton $gap={19}>
              <svg width="8" height="13" fill="none" stroke="#a5a3a1" strokeWidth="1.500"><path d="M1 0 7 6 1 12" /></svg>
            </PageButton>
          </GridToolbar>

          <Table>
            <HeadRow>
              <HeadCell>Name</HeadCell>
              <HeadCell>Contact</HeadCell>
            </HeadRow>
            {rows.map(([name, contact, h, lh], i) => (
              <Row key={name} $h={h} $alt={i % 2 === 1}>
                <Cell $lh={lh}>{name}</Cell>
                <Cell $lh={lh}>{contact}</Cell>
              </Row>
            ))}
          </Table>

          <Footer>
            <Copyright>
              <Magento w={20} h={22} color="#f26322" />
              <span>Copyright © 2020 Magento Commerce Inc. All rights reserved.</span>
            </Copyright>
            <Version>
              <b>Magento</b> ver. 2.3.0
              <IssueLink>Report an Issue</IssueLink>
            </Version>
          </Footer>
        </Content>

        <ScrollTrack><ScrollThumb /></ScrollTrack>
      </Viewport>

      <Dock>
        <Wallpaper width="1366" height="69">
          <filter id="soil" x="0" y="0" width="100%" height="100%">
            <feTurbulence type="fractalNoise" baseFrequency="0.1 0.2" numOctaves="4" seed="8" />
            <feColorMatrix values="1.5 0 0 0 -0.5  1.5 0 0 0 -0.5  1.5 0 0 0 -0.5  0 0 0 0 1" />
          </filter>
          <rect width="1366" height="69" filter="url(#soil)" />
        </Wallpaper>
        {dockApps.map((a) => (
          <DockItem key={a.name} $active={a.active}>
            {a.art}
            {a.dots && <RunningDots>{Array.from({ length: a.dots }, (_, i) => <i key={i} />)}</RunningDots>}
          </DockItem>
        ))}
        <AppGrid>{Array.from({ length: 9 }, (_, i) => <i key={i} />)}</AppGrid>
      </Dock>
    </Desktop>
  );
}
